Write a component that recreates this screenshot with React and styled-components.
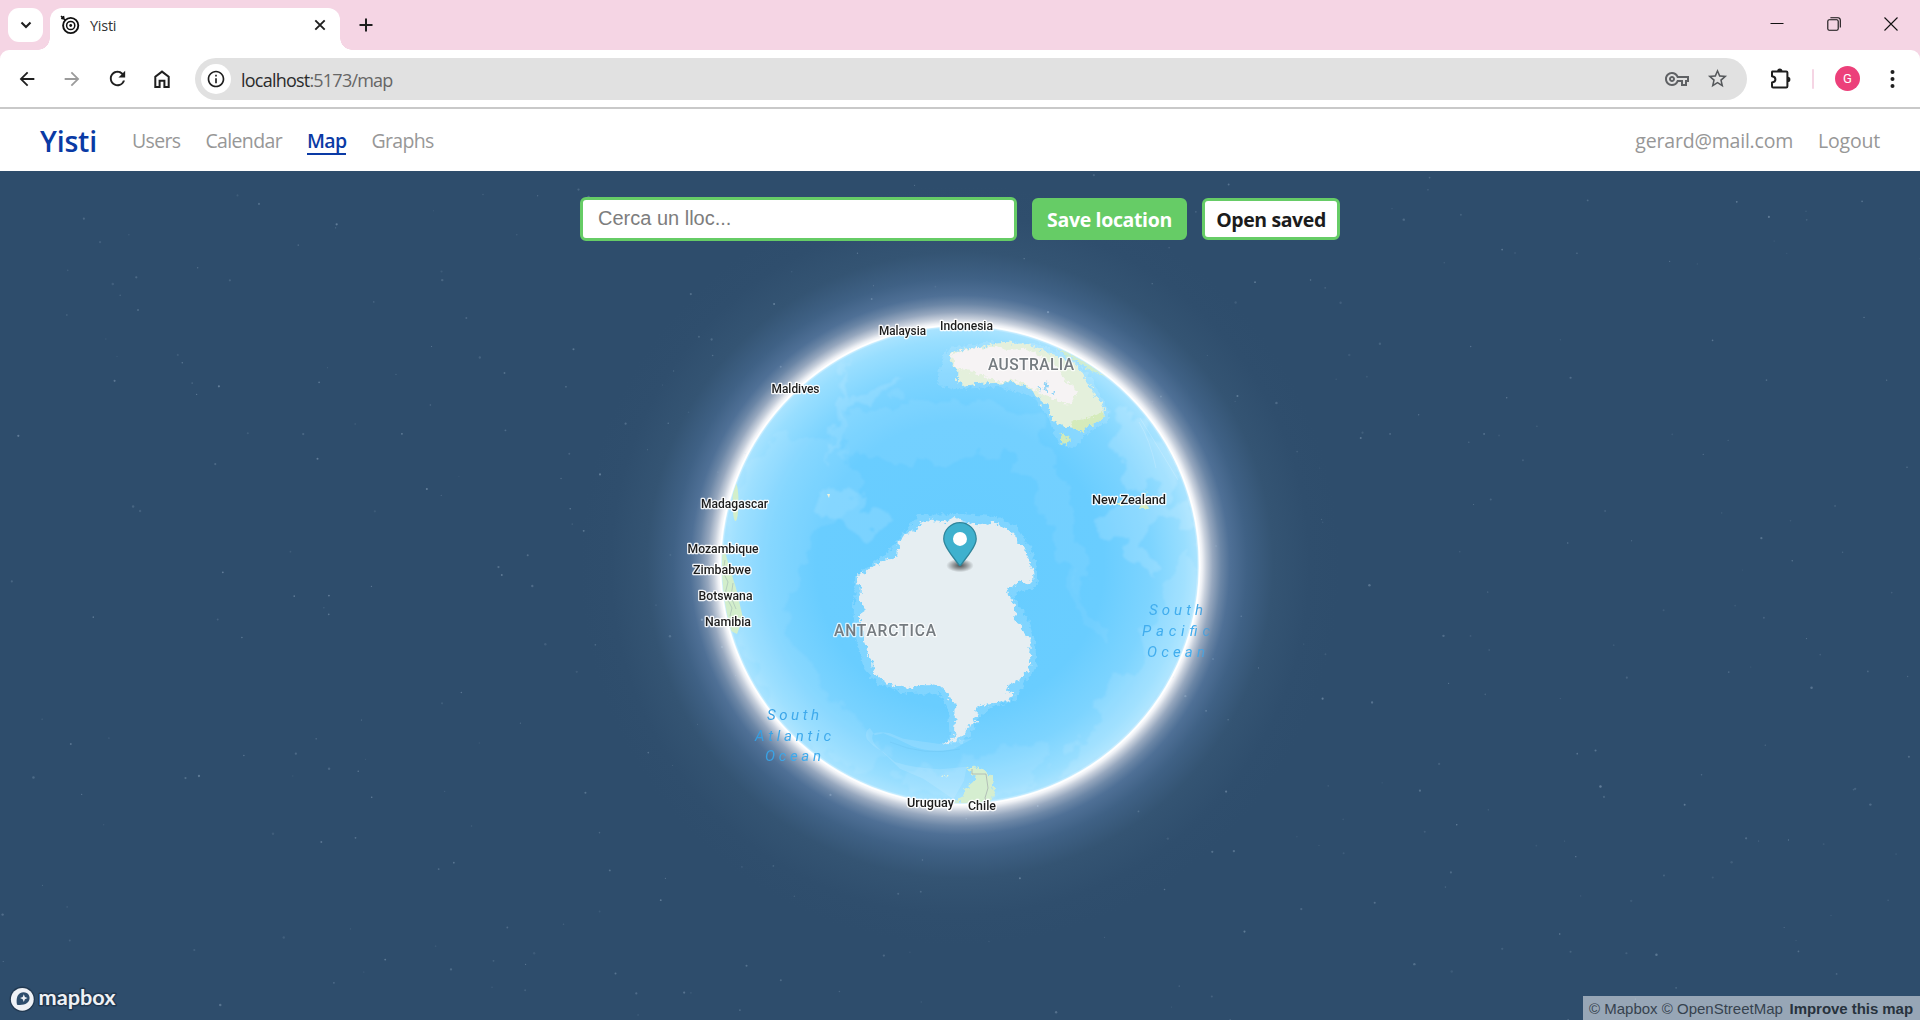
import React from "react";
import styled, { createGlobalStyle } from "styled-components";
import {
  MdArrowBack,
  MdArrowForward,
  MdRefresh,
  MdInfoOutline,
  MdOutlineVpnKey,
  MdStarBorder,
} from "react-icons/md";

const ui = `"Segoe UI", "Open Sans", "Noto Sans", sans-serif`;

const GlobalStyle = createGlobalStyle`
  * { box-sizing: border-box; }
  body { margin: 0; background: #fff; font-family: ${ui}; overflow: hidden; }
  button, input { font: inherit; }
`;

const Window = styled.div`
  width: 100%;
  height: 100vh;
  display: flex;
  flex-direction: column;
  overflow: hidden;
`;

/* ---------- browser chrome ---------- */
const TabStrip = styled.div`
  flex: none;
  height: 50px;
  background: #f5d5e4;
  display: flex;
  align-items: stretch;
  padding: 8px 0 0 8px;
`;

const TabSearch = styled.div`
  width: 35px;
  height: 34px;
  border-radius: 11px;
  background: #fff;
  display: grid;
  place-items: center;
`;

const Tab = styled.div`
  position: relative;
  width: 290px;
  margin-left: 7px;
  padding: 0 12px 8px 10px;
  border-radius: 12px 12px 0 0;
  background: #fff;
  display: flex;
  align-items: center;
  &::before,
  &::after {
    content: "";
    position: absolute;
    bottom: 0;
    width: 12px;
    height: 12px;
  }
  &::before {
    left: -12px;
    background: radial-gradient(circle at 0 0, transparent 11.5px, #fff 12px);
  }
  &::after {
    right: -12px;
    background: radial-gradient(circle at 100% 0, transparent 11.5px, #fff 12px);
  }
`;

const TabTitle = styled.span`
  flex: 1;
  margin-left: 10px;
  font-size: 14.5px;
  letter-spacing: -0.25px;
  color: #333;
`;

const NewTab = styled.div`
  width: 30px;
  margin-left: 11px;
  height: 34px;
  display: grid;
  place-items: center;
`;

const WindowControls = styled.div`
  margin-left: auto;
  height: 34px;
  display: flex;
  align-items: center;
  gap: 43px;
  padding: 0 22px 2px 0;
`;

const ToolbarBack = styled.div`
  flex: none;
  background: #f5d5e4;
`;

const Toolbar = styled.div`
  height: 59px;
  padding: 0 24px 0 15px;
  border-bottom: 2px solid #c9c9c9;
  border-radius: 9px 9px 0 0;
  background: #fff;
  display: flex;
  align-items: center;
  color: #1f1f1f;
`;

const NavIcons = styled.div`
  display: flex;
  align-items: center;
  gap: 21px;
`;

const IconSlot = styled.span`
  width: 24px;
  height: 24px;
  display: grid;
  place-items: center;
  color: ${(p) => p.$color || "#1f1f1f"};
`;

const AddressBar = styled.div`
  width: 1552px;
  height: 42px;
  margin-left: 21px;
  padding: 0 18px 0 6px;
  border-radius: 21px;
  background: #e1e1e1;
  display: flex;
  align-items: center;
`;

const SiteInfo = styled.span`
  width: 30px;
  height: 30px;
  border-radius: 50%;
  background: #fff;
  display: grid;
  place-items: center;
`;

const Url = styled.span`
  flex: 1;
  margin-left: 10px;
  padding-top: 2px;
  font-size: 18px;
  line-height: 24px;
  letter-spacing: -0.78px;
  color: #666;
`;

const Host = styled.span`
  color: #2b2b2b;
`;

const BarActions = styled.div`
  display: flex;
  align-items: center;
  gap: 16px;
`;

const ToolbarEnd = styled.div`
  flex: 1;
  display: flex;
  align-items: center;
  justify-content: flex-end;
`;

const Divider = styled.span`
  width: 2px;
  height: 20px;
  margin: 0 21px 0 19px;
  border-radius: 1px;
  background: #f5d5e4;
`;

const Avatar = styled.span`
  width: 25px;
  height: 25px;
  margin-right: 30px;
  border-radius: 50%;
  background: #ec407a;
  color: #fff;
  font: 13px/26px Roboto, sans-serif;
  text-align: center;
`;

/* ---------- site navigation ---------- */
const SiteNav = styled.nav`
  flex: none;
  height: 62px;
  padding: 2px 40px 0;
  background: #fff;
  display: flex;
  align-items: center;
`;

const Brand = styled.a`
  width: 92px;
  font-size: 28.5px;
  line-height: 40px;
  font-weight: 600;
  letter-spacing: -0.2px;
  color: #0a3aa5;
`;

const NavList = styled.div`
  display: flex;
  gap: 25px;
  ${(p) => p.$end && "margin-left: auto;"}
`;

const NavLink = styled.a`
  padding-top: 1px;
  font-size: 19.5px;
  line-height: 24px;
  letter-spacing: ${(p) => p.$track || "-0.65px"};
  font-weight: ${(p) => (p.$active ? 600 : 400)};
  color: ${(p) => (p.$active ? "#0a3aa5" : "#979797")};
  border-bottom: 2px solid ${(p) => (p.$active ? "#0a3aa5" : "transparent")};
`;

/* ---------- map ---------- */
const MapPane = styled.main`
  position: relative;
  flex: 1;
  min-height: 0;
  background: #2e4d6c;
  overflow: hidden;
`;

const Scene = styled.svg`
  display: block;
`;

const SearchRow = styled.div`
  position: absolute;
  top: 26px;
  left: 0;
  right: 0;
  display: flex;
  justify-content: center;
  align-items: center;
  gap: 15px;
`;

const SearchInput = styled.input`
  width: 437px;
  height: 44px;
  padding: 0 15px 2px;
  border: 3px solid #6c6;
  border-radius: 6px;
  background: #fff;
  outline: 0;
  font: 20px "Liberation Sans", sans-serif;
  &::placeholder {
    color: #7d7d7d;
    opacity: 1;
  }
`;

const ActionButton = styled.button`
  width: ${(p) => p.$width}px;
  height: 42px;
  padding: 1px 0 0;
  border: 3px solid #6c6;
  border-radius: 6px;
  background: ${(p) => (p.$filled ? "#6c6" : "#fff")};
  color: ${(p) => (p.$filled ? "#fff" : "#1c1c1c")};
  font-size: 19.5px;
  line-height: 24px;
  font-weight: 700;
  letter-spacing: ${(p) => p.$track};
  white-space: nowrap;
`;

const Attribution = styled.div`
  position: absolute;
  right: 0;
  bottom: 0;
  width: 337px;
  height: 24px;
  padding: 1px 7px 0 6px;
  background: rgba(255, 255, 255, 0.5);
  color: #36424e;
  font: 15px/24px "Liberation Sans", sans-serif;
  display: flex;
  justify-content: space-between;
  white-space: nowrap;
`;

const ImproveLink = styled.b`
  color: #27323d;
  letter-spacing: -0.05px;
`;

const countries = [
  ["Malaysia", 879, 334.5, 47],
  ["Indonesia", 940, 329.5, 53],
  ["Maldives", 771.5, 393, 48],
  ["Madagascar", 701, 507.5, 67],
  ["Mozambique", 687.5, 553, 71],
  ["Zimbabwe", 693, 574, 58],
  ["Botswana", 698.5, 599.5, 54],
  ["Namibia", 705, 626, 46],
  ["Uruguay", 907, 806.5, 47],
  ["Chile", 968, 810, 28],
  ["New Zealand", 1092, 504, 74],
];

const continents = [
  ["AUSTRALIA", 988, 369.5, 86],
  ["ANTARCTICA", 834, 636, 102],
];

const oceans = [
  ["South", 767, 720, 52],
  ["Atlantic", 755, 741, 76],
  ["Ocean", 765, 761, 56],
  ["South", 1149, 615, 54],
  ["Pacific", 1142, 636, 68],
  ["Ocean", 1147, 657, 58],
];

const CountryLabel = styled.text`
  font: 500 12.4px Roboto, sans-serif;
  fill: #1d1d1d;
  stroke: rgba(255, 255, 255, 0.9);
  stroke-width: 2.6px;
  stroke-linejoin: round;
  paint-order: stroke;
`;

const ContinentLabel = styled.text`
  font: 500 15.6px Roboto, sans-serif;
  fill: #757b80;
  stroke: rgba(255, 255, 255, 0.75);
  stroke-width: 2.4px;
  stroke-linejoin: round;
  paint-order: stroke;
`;

const OceanLabel = styled.text`
  font: italic 400 15px Roboto, sans-serif;
  fill: url(#oceanText);
`;

const Wordmark = styled.text`
  font: 700 21.5px Lato, sans-serif;
  fill: #eef1f5;
  stroke: #213850;
  stroke-width: 3px;
  stroke-linejoin: round;
  paint-order: stroke;
`;

function makeStars(count) {
  let s = 4711;
  const next = () => {
    s = (s * 16807) % 2147483647;
    return s / 2147483647;
  };
  return Array.from({ length: count }, () => ({
    x: next() * 1920,
    y: 172 + next() * 848,
    r: 0.5 + next() * 0.75,
    o: 0.08 + next() * 0.27,
  }));
}
const stars = makeStars(420);

function GlobeScene() {
  return (
    <Scene width="1920" height="849" viewBox="0 171 1920 849">
      <defs>
        <radialGradient id="sea" gradientUnits="userSpaceOnUse" cx="960" cy="565" r="239.5">
          <stop offset="0" stopColor="#66ccff" />
          <stop offset="0.6" stopColor="#69cdff" />
          <stop offset="0.8" stopColor="#7dd4ff" />
          <stop offset="0.94" stopColor="#98deff" />
          <stop offset="0.988" stopColor="#a8e3ff" />
          <stop offset="1" stopColor="#e4f6ff" />
        </radialGradient>
        <radialGradient id="glow" gradientUnits="userSpaceOnUse" cx="960" cy="565" r="380">
          <stop offset="0.629" stopColor="#ffffff" />
          <stop offset="0.637" stopColor="#f0f2f6" />
          <stop offset="0.648" stopColor="#c8d0dc" />
          <stop offset="0.665" stopColor="#96a7be" />
          <stop offset="0.687" stopColor="#6b86a6" />
          <stop offset="0.71" stopColor="#4f7096" />
          <stop offset="0.755" stopColor="#3f6185" />
          <stop offset="0.824" stopColor="#345473" />
          <stop offset="0.92" stopColor="#2f4e6d" />
          <stop offset="1" stopColor="#2e4d6c" />
        </radialGradient>
        <linearGradient id="oceanText" gradientUnits="userSpaceOnUse" x1="740" y1="0" x2="1212" y2="0">
          <stop offset="0" stopColor="#3298db" />
          <stop offset="0.12" stopColor="#3faaec" />
          <stop offset="0.96" stopColor="#41adee" />
          <stop offset="0.985" stopColor="#4f9fd8" />
          <stop offset="1" stopColor="#5593c2" />
        </linearGradient>
        <radialGradient id="pinShadow">
          <stop offset="0.1" stopColor="#000" stopOpacity="0.6" />
          <stop offset="0.5" stopColor="#000" stopOpacity="0.35" />
          <stop offset="1" stopColor="#000" stopOpacity="0" />
        </radialGradient>
        <clipPath id="disc">
          <circle cx="960" cy="565" r="238" />
        </clipPath>
        <filter id="ragged" x="-5%" y="-5%" width="110%" height="110%">
          <feTurbulence type="fractalNoise" baseFrequency="0.22" numOctaves="3" seed="4" />
          <feDisplacementMap in="SourceGraphic" scale="8" xChannelSelector="R" yChannelSelector="G" />
        </filter>
        <filter id="seabed" x="-5%" y="-5%" width="110%" height="110%">
          <feTurbulence type="fractalNoise" baseFrequency="0.04" numOctaves="5" seed="9" result="n" />
          <feDisplacementMap in="SourceGraphic" in2="n" scale="36" xChannelSelector="R" yChannelSelector="G" />
          <feGaussianBlur stdDeviation="0.8" />
        </filter>
      </defs>

      <circle cx="960" cy="565" r="380" fill="url(#glow)" />
      {stars.map((p, i) => (
        <circle key={i} cx={p.x} cy={p.y} r={p.r} fill="#c6dcf0" opacity={p.o} />
      ))}
      <circle cx="960" cy="565" r="239.5" fill="url(#sea)" />

      <g clipPath="url(#disc)">
        {/* shallow-water shelves and ridges */}
        <g filter="url(#seabed)" fill="#ffffff">
          <path opacity=".07" d="M840 420 L900 400 L980 402 L1040 420 L1062 470 L1075 530 L1090 600 L1060 560 L1040 500 L1010 455 L960 452 L920 470 L870 462 L840 450Z" />
          <path opacity=".07" d="M745 460 L800 430 L850 450 L860 490 L830 520 L800 560 L790 640 L830 700 L890 760 L850 770 L780 720 L740 640 L728 540Z" />
          <path opacity=".13" d="M818 490 L850 486 L868 492 L856 505 L880 512 L892 522 L872 535 L850 530 L838 520 L815 515Z" />
          <path opacity=".12" d="M842 360 L848 400 L870 388 L905 382 L880 398 L852 408 L835 440 L830 460 L828 430 L840 400Z" />
          <path opacity=".14" d="M1092 520 L1112 508 L1140 500 L1190 506 L1196 520 L1150 525 L1140 550 L1158 580 L1130 560 L1118 540 L1100 535Z" />
          <path opacity=".14" d="M1115 420 L1130 410 L1150 430 L1170 450 L1185 490 L1165 500 L1150 480 L1130 490 L1118 460Z" />
          <path opacity=".06" d="M1064 570 L1074 575 L1086 600 L1110 640 L1104 645 L1082 616 L1066 590Z" />
          <path opacity=".1" d="M1180 560 L1198 540 L1196 640 L1150 720 L1090 770 L1050 780 L1100 720 L1096 700 L1140 660Z" />
          <path opacity=".08" d="M900 770 L960 770 L1010 740 L1050 745 L1040 780 L980 800 L900 790Z" />
        </g>
        <path
          transform="translate(840 500) scale(.3333)"
          opacity=".13"
          fill="#fff"
          d="M90 684 Q72 694 80 716 Q100 742 130 756 L165 786 Q220 804 300 808 L380 800 L372 842 L340 898 L300 870 L250 836 L180 806 L140 768 L112 742 Q92 720 98 704 Q110 692 150 700 L190 716 L240 724 L300 732 L400 715 L340 748 Q270 760 215 738 L170 716 L130 700 L104 706 Z"
        />

        <g filter="url(#ragged)">
          <g transform="translate(840 500) scale(.3333)">
            <path
              d="M235 45 L350 42 L470 48 L530 80 L572 140 L592 200 L590 262 L540 275 L520 290 L560 350 L585 420 L590 500 L540 570 L525 600 L450 625 L420 650 L380 720 L330 735 L325 640 L300 580 L200 582 L110 550 L70 500 L40 380 L45 230 L140 160Z"
              fill="#fff"
              opacity=".16"
            />
            <path
              d="M49 225 L62 219 L80 215 L92 203 L108 195 L120 183 L135 175 L150 178 L168 172 L170 150 L177 145 L176 125 L188 112 L196 98 L215 96 L232 84 L240 68 L262 58 L290 62 L310 66 L328 60 L342 50 L360 62 L380 66 L400 74 L420 76 L440 72 L455 68 L472 70 L490 84 L508 92 L525 108 L532 125 L550 140 L558 160 L568 178 L572 200 L580 215 L580 245 L560 250 L540 240 L524 254 L506 266 L498 282 L514 294 L524 312 L526 340 L528 370 L545 380 L553 400 L568 418 L572 440 L570 470 L574 498 L560 515 L545 532 L520 548 L500 560 L502 574 L520 582 L515 594 L500 602 L478 608 L450 610 L425 616 L402 628 L416 640 L400 656 L412 668 L385 680 L374 700 L362 712 L350 722 L330 728 L304 734 L340 716 L346 700 L342 690 L344 670 L348 650 L343 640 L347 612 L330 596 L318 574 L300 558 L280 550 L262 556 L240 554 L218 564 L190 562 L165 558 L140 550 L118 534 L102 518 L98 500 L96 480 L84 462 L78 440 L72 425 L72 395 L60 378 L60 345 L74 325 L62 310 L62 262 L52 250Z"
              fill="#e6eef2"
            />
            <path d="M375 806 L400 800 L430 808 L445 818 L462 835 L456 850 L464 875 L458 900 L420 912 L340 905 L370 885 L376 868 L398 850 L408 838 L398 820Z" fill="#d5eed0" />
            <path d="M306 826 L330 825 L322 830Z" fill="#e9f6dc" />
          </g>
        </g>

        <g filter="url(#ragged)">
          <g transform="translate(930 290) scale(.3333)">
            <path d="M40 190 L70 172 L180 155 L320 160 L420 200 L480 260 L530 350 L540 390 L470 430 L430 475 L385 460 L350 370 L310 320 L200 290 L85 298 L20 285Z" fill="#fff" opacity=".13" />
            <path d="M60 192 L75 182 L110 178 L150 174 L175 164 L200 158 L230 155 L250 162 L285 160 L320 172 L345 184 L370 196 L400 205 L430 218 L458 246 L470 275 L490 300 L500 325 L522 348 L520 382 L490 402 L455 424 L430 415 L400 408 L365 390 L358 362 L352 335 L335 345 L330 325 L316 318 L308 302 L285 290 L250 276 L200 278 L140 282 L95 288 L84 275 L85 245 L64 215Z" fill="#e4f0dc" />
            <path d="M62 192 L90 182 L150 174 L190 170 L230 180 L280 176 L320 192 L350 210 L380 230 L400 265 L430 288 L440 310 L425 340 L385 340 L362 318 L345 316 L310 298 L285 280 L250 272 L200 274 L160 258 L120 242 L80 235Z" fill="#f6f3f4" />
            <path d="M420 398 L450 388 L490 380 L516 366 L520 382 L490 402 L455 424 L430 415Z" fill="#cfe8ad" opacity=".7" />
            <path d="M392 426 L410 436 L424 448 L418 460 L398 464 L392 450Z" fill="#cfeaba" />
            <path d="M340 275 L355 280 L352 290 L342 286Z M322 292 L332 296 L330 306Z M344 292 L356 298 L348 308Z M366 306 L376 308 L370 316Z" fill="#8fd3f7" />
            <path d="M370 172 L400 180 L440 200 L500 240 L530 262 L480 240 L430 208Z" fill="#d8efc5" opacity=".8" />
            <path d="M644 600 L650 625 L658 660 L622 655 L634 640Z M520 630 L560 634 L600 642 L560 646Z" fill="#d4edc4" />
          </g>
        </g>
        <ellipse cx="735.5" cy="502" rx="3" ry="19" fill="#d3efca" />
        <path d="M721 533 L724 548 L729 566 L736 588 L743 618 L737 634 L729 630 L722 590Z" fill="#d2eecb" />
        <path d="M725 560 l-2 12 l5 10 l-3 12 l7 14 l-2 8 M733 583 l-2 14 l5 12" fill="none" stroke="#a9bfb7" strokeWidth=".7" />
        <path d="M972 769 v5 h14 l2 14 l-3 10 l2 4" fill="none" stroke="#a9b3b0" strokeWidth=".8" />
        <path d="M827 494 l3 0 l-1 4z" fill="#f1f4da" />
        <g fill="none" stroke="#fff" opacity=".22">
          <path d="M1139 422 Q1150 440 1156 468" strokeWidth=".8" />
          <path d="M1140 418 Q1160 450 1178 480" strokeWidth=".8" />
          <path d="M890 742 Q925 757 960 749" strokeWidth=".7" stroke="#53a9d8" />
        </g>
      </g>

      <circle cx="960" cy="565" r="239.6" fill="none" stroke="#fff" strokeWidth="1.8" opacity=".9" />

      {oceans.map(([t, x, y, w], i) => (
        <OceanLabel key={i} x={x} y={y} textLength={w}>
          {t}
        </OceanLabel>
      ))}
      {continents.map(([t, x, y, w]) => (
        <ContinentLabel key={t} x={x} y={y} textLength={w}>
          {t}
        </ContinentLabel>
      ))}
      {countries.map(([t, x, y, w]) => (
        <CountryLabel key={t} x={x} y={y} textLength={w} lengthAdjust="spacingAndGlyphs">
          {t}
        </CountryLabel>
      ))}

      {/* location pin */}
      <g transform="translate(943.1 522) scale(1.25)">
        <ellipse cx="13.5" cy="34.8" rx="11" ry="5.4" fill="url(#pinShadow)" />
        <path
          d="M27,13.5C27,19.07 20.25,27 14.75,34.5C14.02,35.5 12.98,35.5 12.25,34.5C6.75,27 0,19.22 0,13.5C0,6.04 6.04,0 13.5,0C20.96,0 27,6.04 27,13.5Z"
          fill="#2f859b"
        />
        <path
          d="M26,13.5C26,18.6 19.5,26.3 14,33.8C13.7,34.2 13.3,34.2 13,33.8C7.5,26.3 1,18.6 1,13.5C1,6.6 6.6,1 13.5,1C20.4,1 26,6.6 26,13.5Z"
          fill="#3fb1ce"
        />
        <circle cx="13.5" cy="13.5" r="5.6" fill="#fff" />
      </g>

      {/* provider logo */}
      <circle cx="22.3" cy="999.3" r="12.7" fill="#213850" />
      <circle cx="22.3" cy="999.3" r="11.4" fill="#eef1f5" />
      <path d="M17 1004.8 C16 999 17.2 995 20 993.3 C23.2 991.4 27.2 992.3 28.8 995 C30.4 998 29.4 1001.3 27 1003 C24.5 1004.8 21 1005.3 17 1004.8Z" fill="#2e4d6c" />
      <path d="M23.8 994.2 L24.9 997 L27.6 998.1 L24.9 999.2 L23.8 1002 L22.7 999.2 L20 998.1 L22.7 997Z" fill="#eef1f5" />
      <Wordmark x="38.5" y="1005.3" textLength="77" lengthAdjust="spacingAndGlyphs">
        mapbox
      </Wordmark>
    </Scene>
  );
}

/* ---------- small drawings ---------- */
const Favicon = () => (
  <svg width="20" height="20" viewBox="0 0 20 20" fill="none" stroke="#111">
    <circle cx="10.7" cy="10.5" r="7.6" strokeWidth="1.9" />
    <circle cx="10.7" cy="10.5" r="4.1" strokeWidth="1.5" />
    <circle cx="10.7" cy="10.5" r="1.4" fill="#111" stroke="none" />
    <path d="M1 1 L5.4 5.2 M1.2 3.2 L4 4 L3.4 1" strokeWidth="1.5" />
  </svg>
);

const Puzzle = () => (
  <svg width="24" height="24" viewBox="0 0 24 24">
    <path
      d="M3.2 4.4 H17.2 Q18.4 4.4 18.4 5.6 V19.2 Q18.4 20.4 17.2 20.4 H4.2 Q3 20.4 3 19.2 V15.4 Q6.4 15 6.4 12.4 Q6.4 9.8 3 9.3 V5.4Z"
      fill="none"
      stroke="#1f1f1f"
      strokeWidth="2"
      strokeLinejoin="round"
    />
    <path d="M8.2 4 a2.6 2.6 0 0 1 5.2 0z M18.8 9.8 a2.6 2.6 0 0 1 0 5.2z" fill="#1f1f1f" />
  </svg>
);

export default function App() {
  return (
    <Window>
      <GlobalStyle />
      <TabStrip>
        <TabSearch>
          <svg width="12" height="8" viewBox="0 0 12 8" fill="none" stroke="#1f1f1f" strokeWidth="2.1">
            <path d="M1.5 1.5 L6 6 L10.5 1.5" />
          </svg>
        </TabSearch>
        <Tab>
          <Favicon />
          <TabTitle>Yisti</TabTitle>
          <svg width="16" height="16" viewBox="0 0 16 16" stroke="#1f1f1f" strokeWidth="1.9">
            <path d="M3.3 3.3 L12.7 12.7 M12.7 3.3 L3.3 12.7" />
          </svg>
        </Tab>
        <NewTab>
          <svg width="14" height="14" viewBox="0 0 14 14" stroke="#1f1f1f" strokeWidth="2">
            <path d="M7 .5 V13.5 M.5 7 H13.5" />
          </svg>
        </NewTab>
        <WindowControls>
          <svg width="14" height="14" viewBox="0 0 14 14" stroke="#111">
            <path d="M.5 6.5 H13.5" />
          </svg>
          <svg width="14" height="14" viewBox="0 0 14 14" fill="none" stroke="#111" strokeWidth="1.1">
            <rect x=".8" y="2.8" width="10.4" height="10.4" rx="1.4" />
            <path d="M3.4 .8 H11 Q13.3 .8 13.3 3.2 V10.6" />
          </svg>
          <svg width="14" height="14" viewBox="0 0 14 14" stroke="#111" strokeWidth="1.1">
            <path d="M.5 .5 L13.5 13.5 M13.5 .5 L.5 13.5" />
          </svg>
        </WindowControls>
      </TabStrip>

      <ToolbarBack>
        <Toolbar>
          <NavIcons>
            <IconSlot><MdArrowBack size={22} /></IconSlot>
            <IconSlot $color="#9b9b9b"><MdArrowForward size={22} /></IconSlot>
            <IconSlot><MdRefresh size={23} /></IconSlot>
            <IconSlot>
              <svg width="20" height="20" viewBox="0 0 20 20" fill="none" stroke="#1f1f1f" strokeWidth="2">
                <path d="M3.3 18 V7.8 L10 2.6 L16.7 7.8 V18 H12.4 V11.8 H7.6 V18 Z" />
              </svg>
            </IconSlot>
          </NavIcons>
          <AddressBar>
            <SiteInfo><MdInfoOutline size={20} /></SiteInfo>
            <Url><Host>localhost</Host>:5173/map</Url>
            <BarActions>
              <IconSlot $color="#5f6164"><MdOutlineVpnKey size={24} /></IconSlot>
              <IconSlot $color="#55585b"><MdStarBorder size={23} /></IconSlot>
            </BarActions>
          </AddressBar>
          <ToolbarEnd>
            <Puzzle />
            <Divider />
            <Avatar>G</Avatar>
            <svg width="6" height="20" viewBox="0 0 6 20" fill="#1f1f1f">
              <circle cx="2.5" cy="3" r="2" />
              <circle cx="2.5" cy="10" r="2" />
              <circle cx="2.5" cy="17" r="2" />
            </svg>
          </ToolbarEnd>
        </Toolbar>
      </ToolbarBack>

      <SiteNav>
        <Brand>Yisti</Brand>
        <NavList>
          <NavLink>Users</NavLink>
          <NavLink>Calendar</NavLink>
          <NavLink $active>Map</NavLink>
          <NavLink>Graphs</NavLink>
        </NavList>
        <NavList $end>
          <NavLink $track="-0.2px">gerard@mail.com</NavLink>
          <NavLink $track="-0.2px">Logout</NavLink>
        </NavList>
      </SiteNav>

      <MapPane>
        <GlobeScene />
        <SearchRow>
          <SearchInput placeholder="Cerca un lloc..." />
          <ActionButton $filled $width={155} $track="-0.35px">Save location</ActionButton>
          <ActionButton $width={138} $track="-0.4px">Open saved</ActionButton>
        </SearchRow>
        <Attribution>
          <span>© Mapbox © OpenStreetMap</span>
          <ImproveLink>Improve this map</ImproveLink>
        </Attribution>
      </MapPane>
    </Window>
  );
}
